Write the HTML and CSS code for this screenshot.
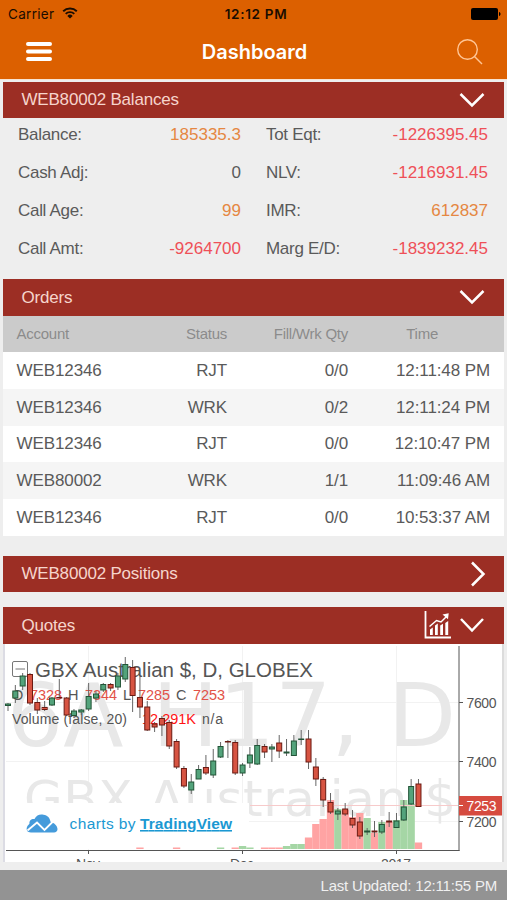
FILE: index.html
```html
<!DOCTYPE html>
<html lang="en">
<head>
    <meta charset="UTF-8">
    <meta name="viewport" content="width=device-width, initial-scale=1.0">
    <title>Dashboard</title>
    <link rel="stylesheet" href="styles.css">
    <script src="script.js" defer></script>
</head>
<body>
    <header class="header">
        <div class="status-bar">
            <div class="carrier">
                <span>Carrier</span>
                <svg class="wifi" width="16" height="12" viewBox="0 0 16 12">
                    <path d="M1.2 4.2a9.8 9.8 0 0 1 13.6 0M3.7 6.9a6.2 6.2 0 0 1 8.6 0" fill="none" stroke="#1a0c00" stroke-width="1.9"/>
                    <path d="M8 11.5L5.3 8.9a3.9 3.9 0 0 1 5.4 0z" fill="#1a0c00"/>
                </svg>
            </div>
            <span class="clock">12:12 PM</span>
            <div class="battery">
                <svg width="30" height="12" viewBox="0 0 30 12">
                    <rect x="0" y="0" width="27" height="12" rx="2"/>
                    <path d="M28 4c2 .5 2 3.500 0 4z"/>
                </svg>
            </div>
        </div>
        <div class="nav-bar">
            <svg class="menu-icon" width="28" height="22" viewBox="0 0 28 22">
                <path d="M3 3h22M3 10.500h22M3 18h22" stroke="#fff" stroke-width="4" stroke-linecap="round"/>
            </svg>
            <h1 class="title">Dashboard</h1>
            <svg class="search-icon" width="26" height="26" viewBox="0 0 26 26">
                <circle cx="10.500" cy="10.500" r="9.800"/>
                <path d="M17.500 17.500l7.500 7.500"/>
            </svg>
        </div>
    </header>

    <main class="content">
        <div class="section-bar">
            <h2>WEB80002 Balances</h2>
            <svg class="chevron" width="26" height="16" viewBox="0 0 26 16"><path d="M1.500 2L13 13.500L24.500 2"/></svg>
        </div>
        <div class="balances">
            <div class="balance"><span>Balance:</span><span class="orange">185335.3</span></div>
            <div class="balance"><span>Tot Eqt:</span><span class="red">-1226395.45</span></div>
            <div class="balance"><span>Cash Adj:</span><span>0</span></div>
            <div class="balance"><span>NLV:</span><span class="red">-1216931.45</span></div>
            <div class="balance"><span>Call Age:</span><span class="orange">99</span></div>
            <div class="balance"><span>IMR:</span><span class="orange">612837</span></div>
            <div class="balance"><span>Call Amt:</span><span class="red">-9264700</span></div>
            <div class="balance"><span>Marg E/D:</span><span class="red">-1839232.45</span></div>
        </div>

        <div class="section-bar">
            <h2>Orders</h2>
            <svg class="chevron" width="26" height="16" viewBox="0 0 26 16"><path d="M1.500 2L13 13.500L24.500 2"/></svg>
        </div>
        <table class="orders">
            <thead>
                <tr><th class="account">Account</th><th class="status">Status</th><th class="qty">Fill/Wrk Qty</th><th class="time">Time</th></tr>
            </thead>
            <tbody>
                <tr><td>WEB12346</td><td>RJT</td><td>0/0</td><td>12:11:48 PM</td></tr>
                <tr><td>WEB12346</td><td>WRK</td><td>0/2</td><td>12:11:24 PM</td></tr>
                <tr><td>WEB12346</td><td>RJT</td><td>0/0</td><td>12:10:47 PM</td></tr>
                <tr><td>WEB80002</td><td>WRK</td><td>1/1</td><td>11:09:46 AM</td></tr>
                <tr><td>WEB12346</td><td>RJT</td><td>0/0</td><td>10:53:37 AM</td></tr>
            </tbody>
        </table>

        <div class="section-bar positions">
            <h2>WEB80002 Positions</h2>
            <svg class="chevron right" width="16" height="26" viewBox="0 0 16 26"><path d="M2 1.500L13.500 13L2 24.500"/></svg>
        </div>

        <div class="section-bar">
            <h2>Quotes</h2>
            <svg class="chart-icon" width="28" height="28" viewBox="0 0 28 28">
                <path d="M1.500 0v26.500H27" fill="none" stroke="#fff" stroke-width="1.800"/>
                <path d="M6 18.500l2.800-2v7.500H6zM11 14.500l2.800-2V24H11zM16.200 14.500l2.800-1.800V24h-2.800zM21.300 12l2.900-2v14h-2.900z" fill="#fff"/>
                <path d="M5.500 15.500l7-6 4.500 1.500 6-6" fill="none" stroke="#fff" stroke-width="1.500"/>
                <path d="M18.500 3.500l6.200-1.300-.700 6.100z" fill="#fff"/>
            </svg>
            <svg class="chevron" width="26" height="16" viewBox="0 0 26 16"><path d="M2 2L13 13.500L24 2"/></svg>
        </div>
        <div class="chart">
            <svg width="501" height="218" viewBox="3 644 501 218">
                <g class="grid">
                    <path d="M88.500 646V850M242.500 646V850M396.500 646V850M6 702.500H458M6 761.500H458M6 821.500H458"/>
                </g>
                <g class="watermark">
                    <text x="7" y="745.500" font-size="88" textLength="449">6A H17, D</text>
                    <text x="24" y="816" font-size="50" textLength="432">GBX Australian $</text>
                </g>
                <rect x="6" y="803" width="243" height="46" fill="#fff"/>
                <g id="volume"></g>
                <path d="M250 805.500H458" stroke="#f7caca"/>
                <g class="legend">
                    <rect x="12.500" y="661.500" width="15" height="15" rx="1.500" fill="none" stroke="#777"/>
                    <path d="M15.500 669H25" stroke="#777"/>
                    <text x="35" y="676.500" font-size="20.500" textLength="278">GBX Australian $, D, GLOBEX</text>
                    <text x="12" y="699.500" font-size="14.500">O</text>
                    <text class="value" x="30" y="699.500" font-size="14.500" textLength="32">7328</text>
                    <text x="68" y="699.500" font-size="14.500">H</text>
                    <text class="value" x="85" y="699.500" font-size="14.500" textLength="32">7344</text>
                    <text x="123" y="699.500" font-size="14.500">L</text>
                    <text class="value" x="138" y="699.500" font-size="14.500" textLength="32">7285</text>
                    <text x="176" y="699.500" font-size="14.500">C</text>
                    <text class="value" x="193" y="699.500" font-size="14.500" textLength="32">7253</text>
                    <text x="12" y="723.500" font-size="14" textLength="115">Volume (false, 20)</text>
                    <text class="volume-value" x="142" y="723.500" font-size="14.500" textLength="54">12.291K</text>
                    <text x="202" y="723.500" font-size="14" textLength="21">n/a</text>
                </g>
                <g id="candles"></g>
                <g class="axis">
                    <path d="M6 850.500H459.500M459 646V851M88.500 850V854M242.500 850V854M396.500 850V854M459 702.500H463M459 761.500H463M459 821.500H463"/>
                    <text x="466.500" y="708" textLength="30">7600</text>
                    <text x="466.500" y="767" textLength="30">7400</text>
                    <text x="466.500" y="827" textLength="30">7200</text>
                    <text x="76" y="868.500" textLength="24">Nov</text>
                    <text x="230" y="868.500" textLength="24">Dec</text>
                    <text x="381" y="868.500" textLength="30">2017</text>
                    <rect x="459" y="796" width="43" height="19.500" fill="#d64b3f"/>
                    <path class="tick" d="M459 805.500H463"/>
                    <text class="last" x="466.500" y="811" textLength="30">7253</text>
                </g>
                <g class="credit">
                    <path d="M31 832.500c-4 0-5-3-4-5.500 .8-2 2-2.500 2.500-3.500-.5-3 2-5 5-4.500 2-4 5.500-5 9-4.200 4 .7 6.500 3.200 7 7 4 1.200 7 4 7 7.500 0 2-1.500 3.200-3.500 3.200z" fill="#459bdb"/>
                    <path d="M27.500 830.500l9.500-8 7.500 7.500 9.500-9.500" fill="none" stroke="#fff" stroke-width="1.800"/>
                    <text x="69.500" y="829" textLength="66">charts by</text>
                    <text class="brand" x="140" y="829" textLength="92">TradingView</text>
                </g>
            </svg>
        </div>
    </main>

    <footer class="footer">Last Updated: 12:11:55 PM</footer>
</body>
</html>
```
FILE: styles.css
```css
* {
    box-sizing: border-box;
}
body {
    margin: 0;
    height: 900px;
    overflow: hidden;
    display: flex;
    flex-direction: column;
    background: #eeeeee;
    color: #5a5a5a;
    font-family: "Liberation Sans", Arial, sans-serif;
    font-size: 17px;
}
h1, h2 {
    margin: 0;
    font-weight: normal;
}
.header {
    height: 79px;
    background: #dc6000;
    font-family: Inter, sans-serif;
}
.status-bar {
    display: grid;
    grid-template-columns: 1fr auto 1fr;
    align-items: center;
    height: 27px;
    padding: 0 6px 0 8px;
    color: #1a0c00;
    font-size: 13.5px;
}
.carrier {
    display: flex;
    align-items: center;
    gap: 8px;
    letter-spacing: 0.3px;
}
.wifi {
    margin-top: -2px;
}
.clock {
    padding-left: 3px;
    font-weight: 600;
    font-size: 13.5px;
    letter-spacing: 0.7px;
}
.battery {
    display: flex;
    justify-content: flex-end;
}
.nav-bar {
    display: grid;
    grid-template-columns: 28px 1fr 28px;
    align-items: center;
    height: 50px;
    padding: 0 23px 0 25px;
}
.title {
    text-align: center;
    color: #fff;
    font-size: 20px;
    font-weight: 600;
}
.search-icon {
    margin-left: 1px;
    fill: none;
    stroke: #ffc595;
    stroke-width: 1.4;
}
.content {
    flex: 1;
    padding: 1.5px 3px 0;
    border-top: 1px solid #f7e3d2;
    margin-bottom: -1px;
}
.section-bar {
    display: flex;
    align-items: center;
    height: 36.5px;
    padding: 0 19px 0 18.5px;
    background: #9c2e24;
    color: #f6d5cc;
}
.section-bar h2 {
    flex: 1;
    padding-top: 1px;
    font-size: 17px;
    letter-spacing: -0.2px;
}
.chevron {
    fill: none;
    stroke: #fff;
    stroke-width: 2.5;
}
.chart-icon {
    margin-right: 7px;
}
.balances {
    display: grid;
    grid-template-columns: 223px 222px;
    grid-auto-rows: 38px;
    column-gap: 25px;
    height: 160px;
    padding: 0 0 0 15px;
    margin-top: -2px;
    margin-bottom: 3px;
}
.balance {
    display: flex;
    justify-content: space-between;
    align-items: center;
}
.balance span:first-child {
    letter-spacing: -0.3px;
}
.orange {
    color: #e58742;
}
.red {
    color: #ee5058;
}
.orders {
    width: 501px;
    border-collapse: collapse;
    table-layout: fixed;
    margin-bottom: 20px;
}
.orders tr {
    height: 36.7px;
    background: #fff;
}
.orders tbody tr:nth-child(even) {
    background: #f5f5f5;
}
.orders thead tr {
    background: #cbcbcb;
}
.orders th {
    padding: 0;
    font-size: 15px;
    font-weight: normal;
    letter-spacing: -0.25px;
    text-align: right;
    color: #8b8b8b;
}
.orders td {
    padding: 1px 0 0;
    text-align: right;
    letter-spacing: -0.1px;
}
.orders th:first-child,
.orders td:first-child {
    padding-left: 13.5px;
    text-align: left;
}
.orders th:last-child {
    padding-right: 66px;
}
.orders td:last-child {
    padding-right: 14px;
}
.account {
    width: 125px;
}
.status {
    width: 99px;
}
.qty {
    width: 121px;
}
.positions {
    padding-right: 18px;
    margin-bottom: 15px;
}
.chart {
    height: 218.5px;
    background: #fff;
    border-left: 2px solid #dcdce4;
    border-right: 2px solid #dcdcdc;
}
.chart svg {
    display: block;
    margin-left: -2px;
}
.grid path {
    stroke: #f2f2f2;
}
.watermark text {
    fill: #e8e8e8;
    font-family: "DejaVu Sans", Verdana, sans-serif;
}
.legend text {
    fill: #555;
}
.legend .value {
    fill: #e25248;
}
.legend .volume-value {
    fill: #ff1414;
}
.axis path {
    fill: none;
    stroke: #555;
}
.axis text {
    fill: #555;
    font-size: 14px;
}
.axis .tick {
    stroke: #fff;
}
.axis .last {
    fill: #fff;
}
.credit text {
    fill: #1b98d2;
    font-size: 15.5px;
}
.credit .brand {
    font-weight: bold;
    text-decoration: underline;
}
.up {
    fill: #53a37b;
    stroke: #225437;
}
.down {
    fill: #d75442;
    stroke: #6b1a12;
}
.wick {
    stroke: #666;
}
.volume-up {
    fill: #a5d6a5;
}
.volume-down {
    fill: #ffa3a3;
}
.footer {
    height: 30.5px;
    padding-right: 10px;
    background: #939393;
    color: #f0f0f0;
    font-size: 15px;
    letter-spacing: -0.2px;
    line-height: 31px;
    text-align: right;
}
```
FILE: script.js
```js
const SVG_NS = 'http://www.w3.org/2000/svg';
const START_X = 8;
const STEP = 7.33;
const BASELINE = 849;

// [high, body top, body bottom, low, direction]
const candles = [
    [703, 704, 705.5, 711, 'up'], [685, 691, 698, 703, 'up'], [673, 676, 686, 690, 'up'],
    [673, 674.5, 703, 705, 'down'], [698, 702.5, 710, 714, 'down'], [701, 707.5, 709.5, 711, 'down'],
    [697, 698, 705, 706, 'up'], [679, 697.5, 698, 698, 'down'], [697, 698, 715, 716, 'down'],
    [709, 711, 715.5, 717, 'up'], [709, 710, 712, 715, 'up'], [683, 696.5, 709, 711, 'up'],
    [691, 694, 698, 702, 'up'], [683, 684.5, 690, 692, 'up'], [683, 684.5, 688, 691, 'down'],
    [673, 676, 687, 690, 'up'], [657, 664.5, 679, 682, 'up'], [660, 667.5, 695.5, 712, 'down'],
    [677, 697.5, 707, 718, 'down'], [701, 707, 730, 731, 'down'], [722, 724, 727, 732, 'down'],
    [716, 718.5, 725, 736, 'down'], [720, 722.5, 746, 749, 'down'], [739, 741.5, 767, 769, 'down'],
    [766, 768.5, 786, 788, 'down'], [774, 782, 790, 794, 'up'], [765, 769.5, 779, 779, 'up'],
    [755, 767.5, 773, 775, 'down'], [749, 761, 775, 778, 'up'], [742, 746.5, 757, 758, 'up'],
    [740, 741.5, 742, 758, 'down'], [740, 742.5, 773, 775, 'down'], [763, 765, 773, 776, 'up'],
    [747, 755, 763, 768, 'up'], [739, 745.5, 764, 765, 'up'], [744, 746.5, 752, 758, 'down'],
    [744, 747, 749, 762, 'up'], [735, 743, 751, 758, 'down'], [739, 752, 753, 756, 'up'],
    [735, 741, 755.5, 756, 'up'], [730, 739, 739.5, 745, 'up'], [730, 739, 762, 769, 'down'],
    [758, 767, 779, 786, 'down'], [777, 779.5, 800, 807, 'down'], [793, 802.5, 812, 814, 'down'],
    [808, 811, 814, 820, 'up'], [803, 809, 814, 816, 'down'], [810, 818.5, 825, 828, 'down'],
    [817, 822, 836, 839, 'down'], [828, 831, 832, 835, 'up'], [821, 831, 832, 837, 'down'],
    [820, 824.5, 832, 834, 'up'], [812, 821, 822, 827, 'down'], [813, 821, 827.5, 828, 'up'],
    [800, 807, 820, 821, 'up'], [779, 786.5, 804, 805, 'up'], [779, 784, 806.5, 807, 'down']
];

// [candle index, bar top, direction]
const volumes = [
    [18, 847.5, 'down'], [23, 847.5, 'down'], [29, 847.5, 'up'], [31, 847.5, 'down'],
    [32, 846, 'up'], [33, 847.5, 'up'], [35, 847.5, 'down'], [36, 847.5, 'down'],
    [37, 847.5, 'down'], [38, 846, 'up'], [39, 844, 'up'], [40, 844, 'up'],
    [41, 837.5, 'down'], [42, 824, 'down'], [43, 819, 'down'], [44, 800, 'down'],
    [45, 809, 'up'], [46, 810, 'down'], [47, 817, 'down'], [48, 813, 'down'],
    [49, 818, 'up'], [50, 833, 'down'], [51, 822, 'up'], [52, 822, 'down'],
    [53, 820, 'up'], [54, 800, 'up'], [55, 804, 'up'], [56, 842.5, 'down']
];

const draw = (parent, name, attributes) => {
    const element = document.createElementNS(SVG_NS, name);
    for (const key in attributes) {
        element.setAttribute(key, attributes[key]);
    }
    parent.appendChild(element);
};

const volumeGroup = document.getElementById('volume');
volumes.forEach(([index, top, direction]) => {
    draw(volumeGroup, 'rect', {
        class: 'volume-' + direction,
        x: START_X + index * STEP - STEP / 2,
        y: top,
        width: STEP,
        height: BASELINE - top
    });
});

const candleGroup = document.getElementById('candles');
candles.forEach(([high, top, bottom, low, direction], index) => {
    const x = START_X + index * STEP;
    draw(candleGroup, 'line', { class: 'wick', x1: x, x2: x, y1: high, y2: low });
    draw(candleGroup, 'rect', {
        class: direction,
        x: x - 2.5,
        y: top,
        width: 5,
        height: bottom - top
    });
});
```
